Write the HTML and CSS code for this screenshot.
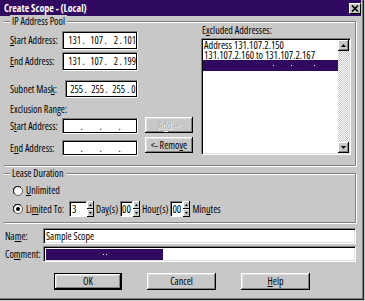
FILE: index.html
```html
<!DOCTYPE html>
<html>
<head>
<meta charset="utf-8">
<title>Create Scope - (Local)</title>
<link rel="stylesheet" href="styles.css">
</head>
<body>
<div class="dialog">
  <div class="titlebar">
    <span class="title">Create Scope - (Local)</span>
    <span class="close"><svg width="8" height="7" viewBox="0 0 8 7"><path d="M1 0.5 L7 6.5 M7 0.5 L1 6.5" stroke="#000" stroke-width="1.6"/></svg></span>
  </div>
  <div class="body">
    <section class="group pool">
      <div class="group-title">IP Address Pool</div>
      <div class="pool-cols">
        <div class="pool-left">
          <div class="frow r1">
            <label><u>S</u>tart Address:</label>
            <div class="ip filled"><span>131</span><i>.</i><span>107</span><i>.</i><span>2</span><i>.</i><span>101</span></div>
          </div>
          <div class="frow r2">
            <label><u>E</u>nd Address:</label>
            <div class="ip filled"><span>131</span><i>.</i><span>107</span><i>.</i><span>2</span><i>.</i><span>199</span></div>
          </div>
          <div class="frow mask">
            <label>Subnet Mas<u>k</u>:</label>
            <div class="ip filled masked"><span>255</span><i>.</i><span>255</span><i>.</i><span>255</span><i>.</i><span class="c">0</span></div>
          </div>
          <div class="excl-title">Exclusion Range:</div>
          <div class="excl">
            <div class="excl-fields">
              <div class="frow small">
                <label>S<u>t</u>art Address:</label>
                <div class="ip empty"><span></span><i>.</i><span></span><i>.</i><span></span><i>.</i><span></span></div>
              </div>
              <div class="frow small second">
                <label>E<u>n</u>d Address:</label>
                <div class="ip empty"><span></span><i>.</i><span></span><i>.</i><span></span><i>.</i><span></span></div>
              </div>
            </div>
            <div class="excl-btns">
              <div class="btn disabled">A<u>d</u>d -&gt;</div>
              <div class="btn remove">&lt;- Remo<u>v</u>e</div>
            </div>
          </div>
        </div>
        <div class="pool-right">
          <div class="list-label">E<u>x</u>cluded Addresses:</div>
          <div class="listbox">
            <div class="items">
              <div class="li">Address 131.107.2.150</div>
              <div class="li">131.107.2.160 to 131.107.2.167</div>
              <div class="li sel"><span class="dot d1"></span><span class="dot d2"></span><span class="dot d3"></span></div>
            </div>
            <div class="vscroll">
              <div class="sbtn"><svg width="5" height="3" viewBox="0 0 5 3"><path d="M2.5 0 L5 3 L0 3Z" fill="#000"/></svg></div>
              <div class="track"></div>
              <div class="sbtn"><svg width="5" height="3" viewBox="0 0 5 3"><path d="M0 0 L5 0 L2.5 3Z" fill="#000"/></svg></div>
            </div>
          </div>
        </div>
      </div>
    </section>

    <section class="group lease">
      <div class="group-title">Lease Duration</div>
      <div class="lease-body">
        <div class="radio-row">
          <svg class="radio" width="10" height="10" viewBox="0 0 10 10"><circle cx="5" cy="5" r="4.5" fill="#fff" stroke="#606060"/><path d="M1.5 8 A4.5 4.5 0 0 1 8 1.5" fill="none" stroke="#000" stroke-width="1"/></svg>
          <span><u>U</u>nlimited</span>
        </div>
        <div class="radio-row limited">
          <svg class="radio" width="10" height="10" viewBox="0 0 10 10"><circle cx="5" cy="5" r="4.5" fill="#fff" stroke="#606060"/><path d="M1.5 8 A4.5 4.5 0 0 1 8 1.5" fill="none" stroke="#000" stroke-width="1"/><circle cx="5" cy="5" r="2" fill="#000"/></svg>
          <span>Li<u>m</u>ited To:</span>
          <div class="num n-days">3</div>
          <div class="spin"><div class="sp"><svg width="3" height="2" viewBox="0 0 3 2"><path d="M1.5 0 L3 2 L0 2Z" fill="#000"/></svg></div><div class="sp"><svg width="3" height="2" viewBox="0 0 3 2"><path d="M0 0 L3 0 L1.5 2Z" fill="#000"/></svg></div></div>
          <span class="unit">Da<u>y</u>(s)</span>
          <div class="num n-small">00</div>
          <div class="spin"><div class="sp"><svg width="3" height="2" viewBox="0 0 3 2"><path d="M1.5 0 L3 2 L0 2Z" fill="#000"/></svg></div><div class="sp"><svg width="3" height="2" viewBox="0 0 3 2"><path d="M0 0 L3 0 L1.5 2Z" fill="#000"/></svg></div></div>
          <span class="unit">Hou<u>r</u>(s)</span>
          <div class="num n-small">00</div>
          <div class="spin"><div class="sp"><svg width="3" height="2" viewBox="0 0 3 2"><path d="M1.5 0 L3 2 L0 2Z" fill="#000"/></svg></div><div class="sp"><svg width="3" height="2" viewBox="0 0 3 2"><path d="M0 0 L3 0 L1.5 2Z" fill="#000"/></svg></div></div>
          <span class="unit">Min<u>u</u>tes</span>
        </div>
      </div>
    </section>

    <div class="text-rows">
      <label>Na<u>m</u>e:</label>
      <div class="tbox">Sample Scope</div>
      <label>Co<u>m</u>ment:</label>
      <div class="tbox"><span class="selection"><span class="dot"></span><span class="dot d4"></span></span></div>
    </div>

    <div class="buttons">
      <div class="btn big default">OK</div>
      <div class="btn big">Cancel</div>
      <div class="btn big"><u>H</u>elp</div>
    </div>
  </div>
</div>
</body>
</html>
```
FILE: styles.css
```css
* { box-sizing: border-box; }
html, body { margin: 0; padding: 0; background: #c8c8c8; }
body {
  font-family: "Open Sans", "Liberation Sans", sans-serif;
  font-stretch: 75%;
  font-size: 10px;
  line-height: 13px;
  color: #000;
}
u { text-decoration: underline; text-underline-offset: 1px; text-decoration-thickness: 1px; }
i { font-style: normal; }
label { white-space: nowrap; }

.dialog {
  width: 364px;
  height: 300px;
  background: #c8c8c8;
  border-right: 1px solid #1c1c1c;
  border-bottom: 1px solid #1c1c1c;
  box-shadow: inset -1px -1px 0 #7c7c7c;
  display: flex;
  flex-direction: column;
}

.titlebar {
  height: 16px;
  margin-right: 2px;
  background: #300a60;
  color: #fff;
  display: flex;
  align-items: center;
  justify-content: space-between;
  padding: 0 0 0 4px;
}
.title { font-size: 10px; font-weight: bold; white-space: nowrap; }
.close {
  width: 12px;
  height: 11px;
  background: #c8c8c8;
  border-top: 1px solid #fff;
  border-left: 1px solid #fff;
  border-right: 1px solid #000;
  border-bottom: 1px solid #000;
  display: flex;
  align-items: center;
  justify-content: center;
}

.body { flex: 1; padding: 0 7px 0 4px; display: flex; flex-direction: column; }

.group {
  border: 1px solid #808080;
  border-left: 0;
  box-shadow: inset 0 1px 0 #fff, 1px 1px 0 #fff;
}
.group-title {
  width: fit-content;
  height: 13px;
  line-height: 13px;
  margin: -7px 0 -6px 6px;
  padding: 0 2px;
  background: #c8c8c8;
  white-space: nowrap;
}
.pool { margin-top: 5px; }
.pool-cols { display: flex; padding: 0 4px 9px 6px; }
.pool-left { width: 183px; padding-top: 9px; }
.pool-right { flex: 1; margin-left: 8px; padding-top: 2px; }

.frow { display: flex; align-items: center; height: 19px; }
.frow label { width: 52px; }
.r2 { margin-top: 2px; }
.mask { margin-top: 9px; height: 18px; }
.mask label { width: 55px; }

.ip {
  height: 100%;
  background: #fff;
  border: 1px solid;
  border-color: #808080 #fff #fff #808080;
  box-shadow: inset 0 0 0 1px #000;
  display: grid;
  align-items: center;
  padding-left: 1px;
  font-size: 10px;
}
.filled { width: 76px; grid-template-columns: 17px 4px 18px 4px 11px 4px 14px; }
.filled.masked { width: 73px; grid-template-columns: 16px 4px 17px 4px 17px 5px 7px; }
.filled span { text-align: right; }
.filled span.c { text-align: center; }
.ip i { text-align: center; padding-left: 1px; }
.empty { width: 76px; grid-template-columns: 16px 3px 16px 3px 16px 3px 16px; }
.empty i { padding-left: 0; }

.excl-title { margin-top: 5px; height: 13px; }
.excl { display: flex; margin-top: 1px; }
.excl-fields { width: 128px; padding-top: 1px; }
.frow.small { height: 16px; }
.frow.second { margin-top: 6px; }
.excl-btns { margin-left: 7px; width: 48px; display: flex; flex-direction: column; }

.btn {
  background: #c8c8c8;
  display: flex;
  align-items: center;
  justify-content: center;
  white-space: nowrap;
  box-shadow: inset -1px -1px 0 #000, inset 1px 1px 0 #fff, inset -2px -2px 0 #808080, inset 2px 2px 0 #dfdfdf;
}
.excl-btns .btn { height: 16px; }
.excl-btns .remove { margin-top: 4px; }
.btn.disabled { color: #b0b0b0; text-shadow: 1px 1px 0 #f0f0f0; }

.list-label { padding-left: 1px; height: 13px; }
.listbox {
  margin-top: 1px;
  height: 117px;
  background: #fff;
  border: 1px solid;
  border-color: #808080 #fff #fff #808080;
  box-shadow: inset 1px 1px 0 #000, inset -1px -1px 0 #dfdfdf;
  display: flex;
  padding: 1px;
}
.items { flex: 1; }
.li { height: 10px; line-height: 10px; padding-left: 1px; white-space: nowrap; font-size: 10.2px; }
.li.sel { height: 11px; background: #300a60; display: flex; align-items: center; }
.dot { width: 1px; height: 1px; background: #fff; flex: none; }
.li.sel .d1 { margin-left: 69px; }
.li.sel .d2 { margin-left: 17px; }
.li.sel .d3 { margin-left: 22px; }

.vscroll { width: 11px; display: flex; flex-direction: column; }
.sbtn {
  height: 11px;
  background: #c8c8c8;
  box-shadow: inset -1px -1px 0 #000, inset 1px 1px 0 #fff, inset -2px -2px 0 #808080;
  display: flex;
  align-items: center;
  justify-content: center;
}
.track {
  flex: 1;
  background: repeating-conic-gradient(#fff 0 25%, #c8c8c8 0 50%) 0 0 / 2px 2px;
}

.lease { margin-top: 7px; }
.lease-body { padding: 10px 0 5px 9px; }
.radio-row { display: flex; align-items: center; height: 13px; white-space: nowrap; }
.radio { margin-right: 3px; flex: none; }
.radio-row.limited { margin-top: 4px; height: 16px; }
.num {
  height: 16px;
  background: #fff;
  border: 1px solid;
  border-color: #808080 #fff #fff #808080;
  box-shadow: inset 1px 1px 0 #000;
  padding-left: 2px;
  display: flex;
  align-items: center;
  font-size: 10.5px;
}
.n-days { width: 18px; margin-left: 5px; }
.n-small { width: 13px; margin-left: 2px; padding-left: 1px; }
.spin { width: 7px; height: 16px; display: flex; flex-direction: column; }
.sp {
  flex: 1;
  background: #c8c8c8;
  box-shadow: inset -1px -1px 0 #000, inset 1px 1px 0 #fff;
  display: flex;
  align-items: center;
  justify-content: center;
}
.unit { margin-left: 2px; }

.text-rows {
  margin-top: 5px;
  display: grid;
  grid-template-columns: 39px 1fr;
  row-gap: 2px;
  align-items: center;
}
.text-rows label { padding-left: 1px; }
.tbox {
  height: 16px;
  background: #fff;
  border: 1px solid;
  border-color: #808080 #fff #fff #808080;
  box-shadow: inset 1px 1px 0 #000, inset -1px -1px 0 #dfdfdf;
  padding-left: 2px;
  display: flex;
  align-items: center;
  white-space: nowrap;
}
.selection {
  width: 117px;
  height: 11px;
  background: #300a60;
  display: flex;
  align-items: center;
  justify-content: center;
  gap: 2px;
}

.buttons { margin-top: 11px; display: flex; gap: 25px; padding-left: 50px; }
.btn.big { width: 69px; height: 17px; }
.btn.default { width: 68px; border: 1px solid #000; }
```
